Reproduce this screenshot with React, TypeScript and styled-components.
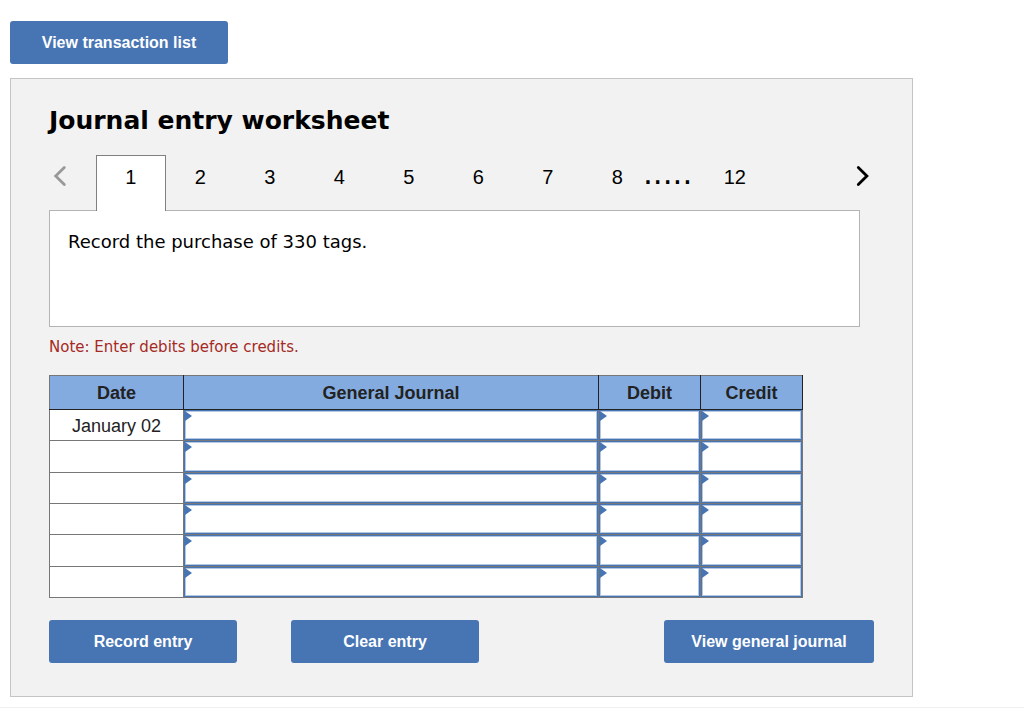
import React, { useState } from "react";
import styled, { createGlobalStyle, css } from "styled-components";

const sans = `"Liberation Sans", Arial, sans-serif`;
const wide = `Verdana, "DejaVu Sans", sans-serif`;

const GlobalStyle = createGlobalStyle`
  *, *::before, *::after { box-sizing: border-box; }
  body { margin: 0; background: #fff; color: #000; font-family: ${sans}; }
`;

const Page = styled.main`
  padding: 21px 111px 10px 10px;
  border-bottom: 1px solid #f0f0f0;
`;

const Button = styled.button<{ $width: number }>`
  width: ${(p) => p.$width}px;
  height: 43px;
  padding: 0;
  border: 0;
  border-radius: 3px;
  background: #4774b3;
  color: #fff;
  font: bold 16px/20px ${sans};
  cursor: pointer;
`;

const Panel = styled.section`
  margin-top: 14px;
  padding: 24px 38px 33px;
  border: 1px solid #c4c4c4;
  background: #f2f2f2;
`;

const Title = styled.h1`
  margin: 0;
  font: bold 25px/36px ${wide};
`;

const Pager = styled.nav`
  display: flex;
  position: relative;
  height: 56px;
  margin: 16px 0 -1px;
`;

const Arrow = styled.button<{ $end?: boolean }>`
  width: 47px;
  height: 42px;
  padding: 0 4px;
  border: 0;
  background: none;
  color: #000;
  text-align: left;
  ${(p) => p.$end && css`width: 22px; margin-left: auto;`}
  &:disabled { color: #999; }
  svg { display: block; }
`;

const TabList = styled.div`
  display: grid;
  grid-template-columns: repeat(8, 1fr);
  width: 556px;
`;

const Tab = styled.button<{ $active?: boolean }>`
  min-width: 69px;
  padding: 0 0 14px;
  border: 1px solid transparent;
  border-bottom: 0;
  background: none;
  color: #000;
  font: 20px/40px ${sans};
  cursor: pointer;
  ${(p) => p.$active && css`background: #fff; border-color: #808080;`}
`;

const Dots = styled.span`
  margin: 0 8px 0 -9px;
  font: 31px/36px "DejaVu Sans", sans-serif;
`;

const Description = styled.div`
  min-height: 117px;
  margin-right: 14px;
  padding: 19px 18px;
  border: 1px solid #b4b4b4;
  background: #fff;
  font: 18px/24px ${wide};
`;

const Note = styled.p`
  margin: 10px 0 18px;
  color: #a52a24;
  font: 15px/20px ${wide};
`;

const TableArea = styled.div`
  margin-right: 71px;
`;

const Table = styled.table`
  width: 100%;
  border-collapse: collapse;
  table-layout: fixed;
  background: #fff;
  color: #222;
  font-size: 18px;
  line-height: 22px;
`;

const Column = styled.col<{ $width?: number }>`
  ${(p) => p.$width && css`width: ${p.$width}px;`}
`;

const HeadCell = styled.th`
  height: 34px;
  padding: 0;
  border: 1px solid #222;
  border-top-color: #777;
  background: #84abe0;
  &:first-child { border-left-color: #777; }
`;

const Row = styled.tr`
  height: 31px;
  &:nth-child(3n + 2) { height: 32px; }
`;

const DateCell = styled.td`
  padding: 2px 0 0;
  border: 1px solid #777;
  text-align: center;
`;

const EntryCell = styled.td`
  position: relative;
  height: 31px;
  padding: 0;
  border: 1px solid #777;
  ${Row}:nth-child(3n + 2) & { height: 32px; }

  &::before {
    content: "";
    position: absolute;
    top: 1px;
    left: 1px;
    border: solid transparent;
    border-width: 5px 0 5px 7px;
    border-left-color: #4774b3;
  }
`;

const EntryInput = styled.input`
  display: block;
  width: 100%;
  height: 100%;
  padding: 0 8px;
  border: 1px solid #4774b3;
  border-radius: 0;
  background: #fff;
  box-shadow: inset 0 0 0 1px #b5c7e1;
  font: 18px/22px ${sans};
  outline: none;
`;

const Actions = styled.div`
  display: flex;
  gap: 54px;
  margin-top: 22px;
  & > :last-child { margin-left: auto; }
`;

const Chevron = ({ left }: { left?: boolean }) => (
  <svg width="16" height="42" viewBox="0 0 16 42" fill="none" stroke="currentColor" strokeWidth="2.8" strokeLinecap="round" aria-hidden="true">
    <path d={left ? "M11.3 12.5 2.7 21 11.3 29.5" : "M2.3 12.5 10.9 21 2.3 29.5"} />
  </svg>
);

const tabs = [1, 2, 3, 4, 5, 6, 7, 8];
const dates = ["January 02", "", "", "", "", ""];
const fields = ["General Journal", "Debit", "Credit"];

export default function App() {
  const [active, setActive] = useState(1);

  return (
    <>
      <GlobalStyle />
      <Page>
        <Button $width={218}>View transaction list</Button>
        <Panel>
          <Title>Journal entry worksheet</Title>
          <Pager aria-label="Entries">
            <Arrow disabled={active === 1} aria-label="Previous" onClick={() => setActive(active === 12 ? 8 : active - 1)}>
              <Chevron left />
            </Arrow>
            <TabList>
              {tabs.map((n) => (
                <Tab key={n} $active={n === active} onClick={() => setActive(n)}>{n}</Tab>
              ))}
            </TabList>
            <Dots>.....</Dots>
            <Tab $active={active === 12} onClick={() => setActive(12)}>12</Tab>
            <Arrow $end aria-label="Next" onClick={() => setActive(active >= 8 ? 12 : active + 1)}>
              <Chevron />
            </Arrow>
          </Pager>
          <Description>Record the purchase of 330 tags.</Description>
          <Note>Note: Enter debits before credits.</Note>
          <TableArea>
            <Table>
              <colgroup>
                <Column $width={134} />
                <Column />
                <Column $width={102} />
                <Column $width={102} />
              </colgroup>
              <thead>
                <tr>
                  <HeadCell scope="col">Date</HeadCell>
                  {fields.map((f) => <HeadCell key={f} scope="col">{f}</HeadCell>)}
                </tr>
              </thead>
              <tbody>
                {dates.map((date, i) => (
                  <Row key={i}>
                    <DateCell>{date}</DateCell>
                    {fields.map((f) => (
                      <EntryCell key={f}>
                        <EntryInput aria-label={`${f}, line ${i + 1}`} />
                      </EntryCell>
                    ))}
                  </Row>
                ))}
              </tbody>
            </Table>
          </TableArea>
          <Actions>
            <Button $width={188}>Record entry</Button>
            <Button $width={188}>Clear entry</Button>
            <Button $width={210}>View general journal</Button>
          </Actions>
        </Panel>
      </Page>
    </>
  );
}
